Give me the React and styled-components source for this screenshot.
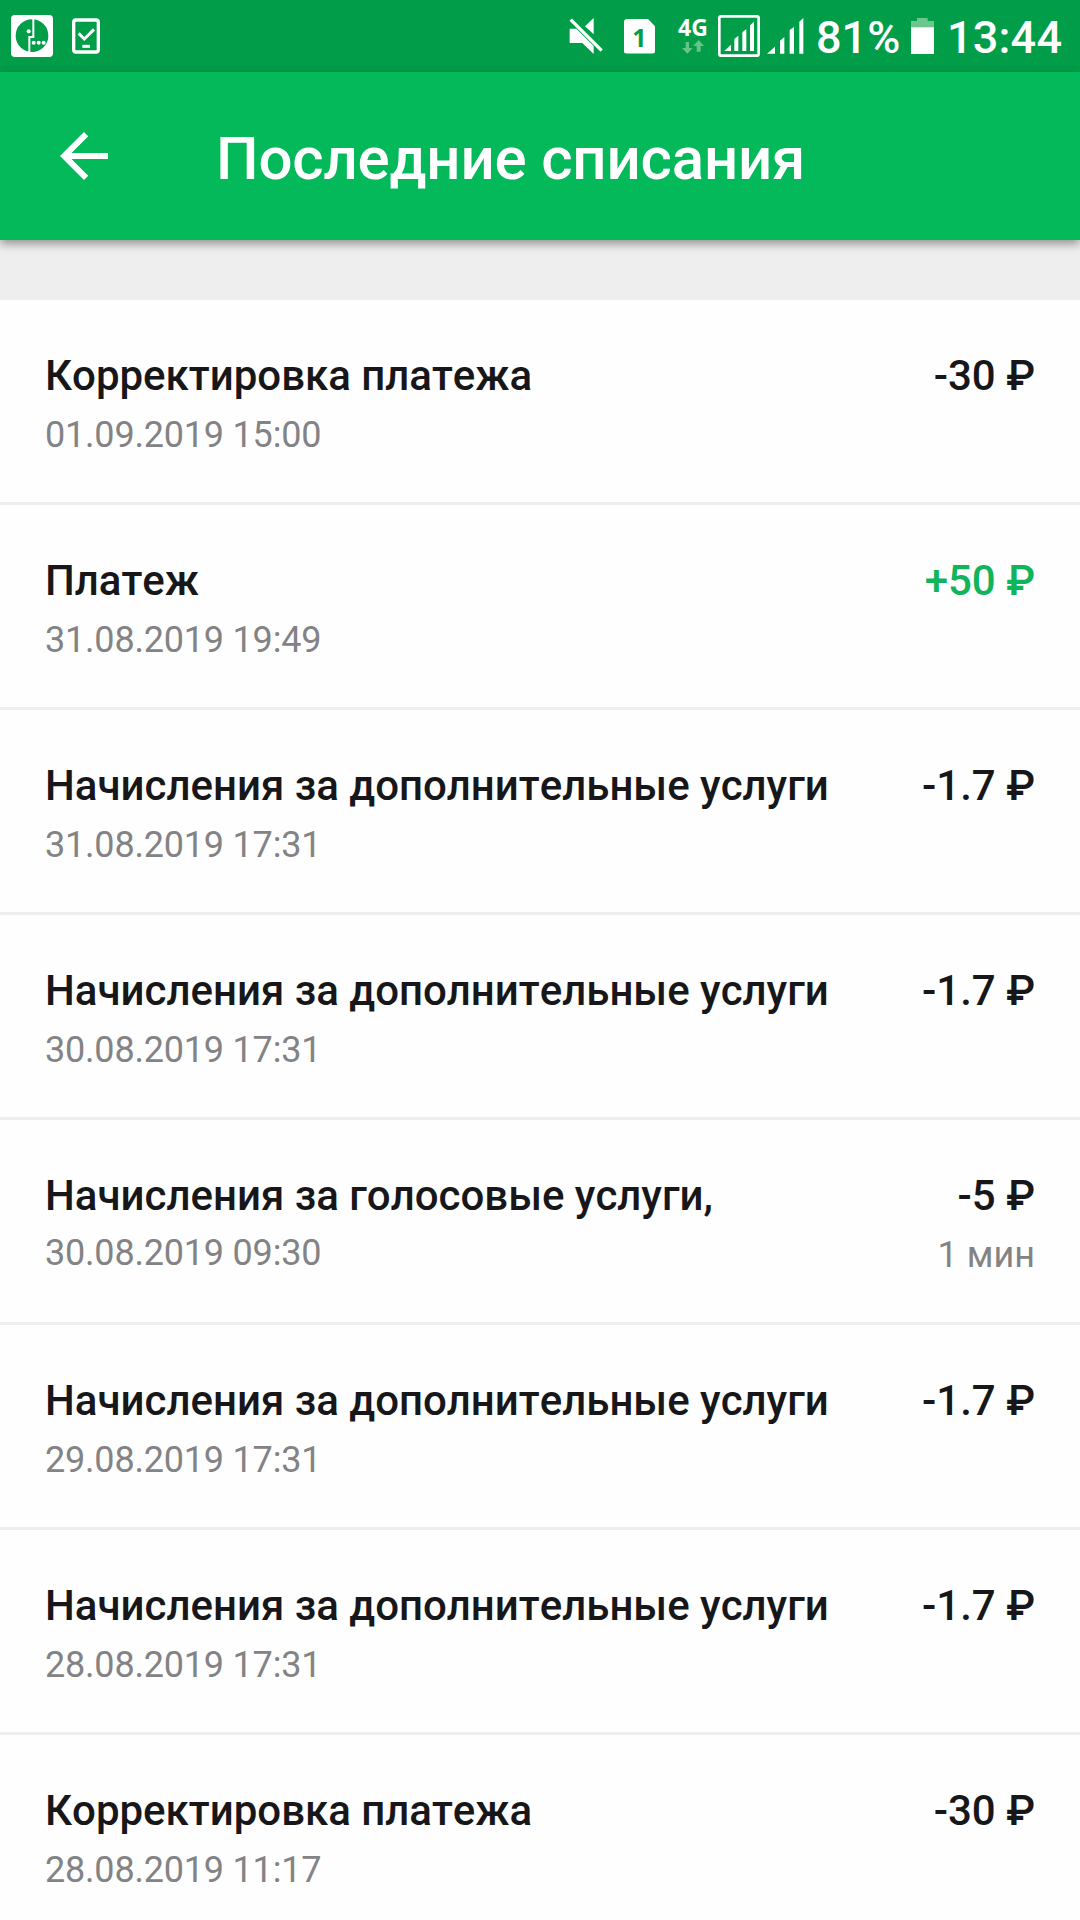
import React from 'react'
import styled, { createGlobalStyle } from 'styled-components';

const GlobalStyle = createGlobalStyle`
  * {
    box-sizing: border-box;
  }
  body {
    margin: 0;
    background-color: #fefefe;
    font-family: Roboto, "Noto Sans", sans-serif;
  }
`

const Screen = styled.div`
  width: 1080px;
  height: 1920px;
  overflow: hidden;
  display: flex;
  flex-direction: column;
`

const StatusBar = styled.div`
  height: 72px;
  flex: none;
  display: flex;
  justify-content: space-between;
  padding: 0 18px 0 11px;
  background-color: #029d49;
  color: white;
  svg {
    display: block;
    flex: none;
  }
`

const StatusGroup = styled.div`
  display: flex;
  align-items: center;
  gap: ${({ $gap }) => $gap || 0}px;
`

const StatusText = styled.span`
  width: ${({ $width }) => $width}px;
  margin-left: ${({ $left }) => $left}px;
  padding-top: 3px;
  font-size: 45px;
  font-weight: 500;
  line-height: 53px;
  letter-spacing: ${({ $spacing }) => $spacing || 0}px;
  white-space: nowrap;
`

const SimBadge = styled.div`
  width: 31px;
  height: 35px;
  margin: 0 23px 0 21px;
  border-radius: 3px;
  background-color: white;
  clip-path: polygon(0 0, 76% 0, 100% 22%, 100% 100%, 0 100%);
  color: #029d49;
  font: 700 25px/36px "Noto Sans", sans-serif;
  text-align: center;
`

const Network = styled.div`
  width: 30px;
  height: 44px;
  margin-right: 10px;
  display: flex;
  flex-direction: column;
  align-items: center;
  font: 700 23px/26px "Noto Sans", sans-serif;
`

const Signals = styled.div`
  display: flex;
  gap: 7px;
`

const Header = styled.header`
  height: 168px;
  flex: none;
  display: flex;
  align-items: center;
  padding: 0 48px;
  background-color: #03b959;
  color: white;
  box-shadow: 0 4px 9px rgba(0, 0, 0, 0.38);
  z-index: 1;
  h1 {
    margin: 6px 0 0 96px;
    font-size: 60px;
    font-weight: 500;
    line-height: 70px;
    letter-spacing: -0.17px;
    white-space: nowrap;
  }
`

const BackButton = styled.button`
  width: 72px;
  height: 72px;
  padding: 0;
  border: none;
  background-color: transparent;
  color: white;
  cursor: pointer;
`

const Spacer = styled.div`
  height: 60px;
  flex: none;
  background-color: #eeeeee;
`

const List = styled.ul`
  margin: 0;
  padding: 0;
  list-style: none;
`

const Item = styled.li`
  height: 205px;
  display: flex;
  justify-content: space-between;
  padding: 51px 45px 0;
  border-bottom: 3px solid #eeeeee;
`

const Column = styled.div`
  display: flex;
  flex-direction: column;
  align-items: ${({ $end }) => ($end ? 'flex-end' : 'flex-start')};
`

const Title = styled.span`
  color: ${({ $income }) => ($income ? '#10b45b' : '#171719')};
  font-size: 42px;
  font-weight: 500;
  font-kerning: none;
  line-height: 49px;
  white-space: nowrap;
`

const Note = styled.span`
  margin-top: ${({ $tight }) => ($tight ? 12 : 14)}px;
  color: #838385;
  font-size: 36px;
  line-height: 43px;
  letter-spacing: ${({ $spacing }) => $spacing || 0}px;
  white-space: nowrap;
`

const operations = [
  { title: 'Корректировка платежа', date: '01.09.2019 15:00', sum: '-30 ₽' },
  { title: 'Платеж', date: '31.08.2019 19:49', sum: '+50 ₽', income: true },
  { title: 'Начисления за дополнительные услуги', date: '31.08.2019 17:31', sum: '-1.7 ₽' },
  { title: 'Начисления за дополнительные услуги', date: '30.08.2019 17:31', sum: '-1.7 ₽' },
  { title: 'Начисления за голосовые услуги,', date: '30.08.2019 09:30', sum: '-5 ₽', amount: '1 мин' },
  { title: 'Начисления за дополнительные услуги', date: '29.08.2019 17:31', sum: '-1.7 ₽' },
  { title: 'Начисления за дополнительные услуги', date: '28.08.2019 17:31', sum: '-1.7 ₽' },
  { title: 'Корректировка платежа', date: '28.08.2019 11:17', sum: '-30 ₽' },
]

const OperatorIcon = () => (
  <svg width="42" height="42" viewBox="0 0 126 126">
    <rect width="126" height="126" rx="11" fill="#fff" />
    <circle cx="63" cy="62" r="49" fill="#029d49" />
    <path d="M67 10V66H55V115" fill="none" stroke="#fff" strokeWidth="6" />
    <circle cx="53" cy="49" r="6" fill="#fff" />
    <circle cx="68" cy="83" r="6" fill="#fff" />
    <circle cx="83" cy="83" r="6" fill="#fff" />
    <circle cx="98" cy="83" r="6" fill="#fff" />
  </svg>
)

const TaskIcon = () => (
  <svg width="28" height="36" viewBox="0 0 84 108">
    <rect x="5" y="6" width="74" height="96" rx="7" fill="none" stroke="#fff" strokeWidth="10" />
    <path d="M20 46L37 63L66 34" fill="none" stroke="#fff" strokeWidth="9" />
    <path d="M31 85H54" stroke="#fff" strokeWidth="9" />
  </svg>
)

const MuteIcon = () => (
  <svg width="34" height="38" viewBox="0 0 102 114">
    <path d="M2 35H22L74 87V111L40 78H2Z" fill="#fff" />
    <path d="M74 3V52L48 28Z" fill="#fff" />
    <path d="M5 8L98 101" stroke="#fff" strokeWidth="10" />
  </svg>
)

const SignalIcon = ({ boxed }) => (
  <svg width={boxed ? 42 : 37} height="42" viewBox={boxed ? '0 0 126 126' : '0 0 111 126'}>
    {boxed ? (
      <>
        <rect x="4" y="4" width="118" height="118" rx="6" fill="none" stroke="#fff" strokeWidth="8" />
        <path d="M19 108L39 89V108Z M49 108V72L61 62V108Z M73 108V52L85 42V108Z M96 108V31L108 20V108Z" fill="#fff" />
      </>
    ) : (
      <path d="M0 116L24 95V116Z M39 116V77L52 66V116Z M68 116V45L81 36V116Z M97 116V20L109 9V116Z" fill="#fff" />
    )}
  </svg>
)

const BatteryIcon = () => (
  <svg width="23" height="36" viewBox="0 0 69 108">
    <path d="M18 0H50V9H69V30H0V9H18Z" fill="#6cc78f" />
    <path d="M0 28H69V108H0Z" fill="#fff" />
  </svg>
)

const App = () => {
  return (
    <Screen>
      <GlobalStyle />
      <StatusBar>
        <StatusGroup $gap={19}>
          <OperatorIcon />
          <TaskIcon />
        </StatusGroup>
        <StatusGroup>
          <MuteIcon />
          <SimBadge>1</SimBadge>
          <Network>
            4G
            <svg width="24" height="14" viewBox="0 0 66 42">
              <path d="M11 6H21V24H32L16 41L0 24H11Z M44 35V18H34L50 0L66 18H56V35Z" fill="#66c489" />
            </svg>
          </Network>
          <Signals>
            <SignalIcon boxed />
            <SignalIcon />
          </Signals>
          <StatusText $width={95} $left={12}>81%</StatusText>
          <BatteryIcon />
          <StatusText $width={115} $left={13} $spacing={0.2}>13:44</StatusText>
        </StatusGroup>
      </StatusBar>
      <Header>
        <BackButton>
          <svg width="72" height="72" viewBox="0 0 24 24">
            <path d="M20 11H7.83l5.59-5.59L12 4l-8 8 8 8 1.41-1.41L7.83 13H20v-2z" fill="currentColor" />
          </svg>
        </BackButton>
        <h1>Последние списания</h1>
      </Header>
      <Spacer />
      <List>
        {operations.map((item, index) => (
          <Item key={index}>
            <Column>
              <Title>{item.title}</Title>
              <Note $tight={Boolean(item.amount)} $spacing={-0.2}>{item.date}</Note>
            </Column>
            <Column $end>
              <Title $income={item.income}>{item.sum}</Title>
              {item.amount && <Note>{item.amount}</Note>}
            </Column>
          </Item>
        ))}
      </List>
    </Screen>
  )
}

export default App
